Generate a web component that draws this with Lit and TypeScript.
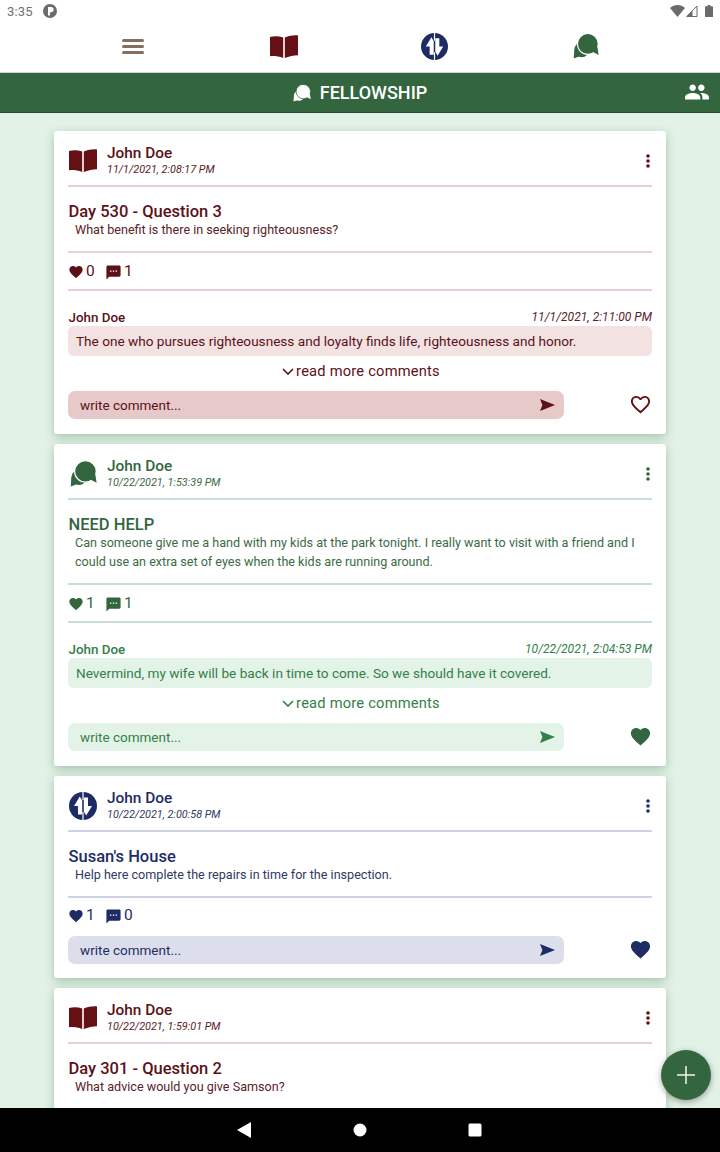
import { LitElement, html, css } from "lit";
import { customElement } from "lit/decorators.js";

const heartPath = "M12 21.35l-1.45-1.32C5.4 15.36 2 12.28 2 8.5 2 5.42 4.42 3 7.5 3c1.74 0 3.41.81 4.5 2.09C13.09 3.81 14.76 3 16.5 3 19.58 3 22 5.42 22 8.5c0 3.78-3.4 6.86-8.55 11.54L12 21.35z";
const heartOutline = "M16.5 3c-1.74 0-3.41.81-4.5 2.09C10.91 3.81 9.24 3 7.5 3 4.42 3 2 5.42 2 8.5c0 3.78 3.4 6.86 8.55 11.54L12 21.35l1.45-1.32C18.6 15.36 22 12.28 22 8.5 22 5.42 19.58 3 16.5 3zm-4.4 15.55l-.1.1-.1-.1C7.14 14.24 4 11.39 4 8.5 4 6.5 5.5 5 7.5 5c1.54 0 3.04.99 3.57 2.36h1.87C13.46 5.99 14.96 5 16.5 5c2 0 3.5 1.5 3.5 3.5 0 2.89-3.14 5.74-7.9 10.05z";
const smsPath = "M20 2H4c-1.1 0-1.99.9-1.99 2L2 22l4-4h14c1.1 0 2-.9 2-2V4c0-1.1-.9-2-2-2zM9 11H7V9h2v2zm4 0h-2V9h2v2zm4 0h-2V9h2v2z";
const peoplePath = "M16 11c1.66 0 2.99-1.34 2.99-3S17.66 5 16 5c-1.66 0-3 1.34-3 3s1.34 3 3 3zm-8 0c1.66 0 2.99-1.34 2.99-3S9.66 5 8 5C6.34 5 5 6.34 5 8s1.34 3 3 3zm0 2c-2.33 0-7 1.17-7 3.5V19h14v-2.5c0-2.33-4.67-3.5-7-3.5zm8 0c-.29 0-.62.02-.97.05 1.16.84 1.97 1.97 1.97 3.45V19h6v-2.5c0-2.33-4.67-3.5-7-3.5z";

const bookIcon = (w: number, h: number) => html`<svg width=${w} height=${h} viewBox="0 0 28 23" fill="currentColor">
  <path d="M0 2 C4.5 .8 9 1 13.2 2.6 V23 C9 21.4 4.5 20.9 0 21.2 Z"/>
  <path d="M28 .4 V20.2 C23.5 20.4 19 21.2 14.8 23 V2.6 C19 .8 23.5 0 28 .4 Z"/>
</svg>`;

const chatIcon = (size: number, cut: string) => html`<svg width=${size} height=${size} viewBox="0 0 28 28" fill="currentColor">
  <circle cx="9.4" cy="18" r="8"/>
  <path d="M1.4 18 L.8 27.4 L6.5 25.4 Z"/>
  <circle cx="16" cy="11.8" r="11.2" stroke=${cut} stroke-width="1.2"/>
  <path d="M20.5 20 L27.6 23.6 L26.3 15 Z"/>
</svg>`;

const activityIcon = (size: number) => html`<svg width=${size} height=${size} viewBox="0 0 28 28">
  <circle cx="14" cy="14" r="14" fill="currentColor"/>
  <path d="M13.4 0 H14.6 V8 H13.4 Z M13.4 20 H14.6 V28 H13.4 Z" fill="#fff"/>
  <path d="M10.8 4.5 L5 14 H9 V22.5 H13.2 V8.5 Z" fill="#fff"/>
  <path d="M17.2 23.5 L23 14 H19 V5.5 H14.8 V19.5 Z" fill="#fff"/>
</svg>`;

const heart = (size: number, path = heartPath) => html`<svg width=${size} height=${size} viewBox="0 0 24 24" fill="currentColor"><path d=${path}/></svg>`;
const sms = (size: number) => html`<svg width=${size} height=${size} viewBox="0 0 24 24" fill="currentColor"><path d=${smsPath}/></svg>`;
const dots = html`<svg width="4" height="14" viewBox="0 0 4 14" fill="currentColor"><circle cx="2" cy="2" r="1.8"/><circle cx="2" cy="7" r="1.8"/><circle cx="2" cy="12" r="1.8"/></svg>`;
const send = html`<svg width="15" height="12" viewBox="0 0 15 12" fill="currentColor"><path d="M0 0 L15 6 L0 12 L2.4 6 Z"/></svg>`;
const chevron = html`<svg width="12" height="7" viewBox="0 0 12 7" fill="none" stroke="currentColor" stroke-width="1.6"><path d="M1 1 L6 6 L11 1"/></svg>`;

interface Post {
  theme: string;
  icon: () => unknown;
  date: string;
  title: string;
  body: string[];
  likes: string;
  comments: string;
  comment?: { date: string; text: string };
  liked: boolean;
}

const posts: Post[] = [
  {
    theme: "maroon", icon: () => bookIcon(28, 23), date: "11/1/2021, 2:08:17 PM",
    title: "Day 530 - Question 3", body: ["What benefit is there in seeking righteousness?"],
    likes: "0", comments: "1", comment: { date: "11/1/2021, 2:11:00 PM", text: "The one who pursues righteousness and loyalty finds life, righteousness and honor." }, liked: false,
  },
  {
    theme: "green", icon: () => chatIcon(27, "#fff"), date: "10/22/2021, 1:53:39 PM",
    title: "NEED HELP", body: ["Can someone give me a hand with my kids at the park tonight. I really want to visit with a friend and I", "could use an extra set of eyes when the kids are running around."],
    likes: "1", comments: "1", comment: { date: "10/22/2021, 2:04:53 PM", text: "Nevermind, my wife will be back in time to come. So we should have it covered." }, liked: true,
  },
  {
    theme: "navy", icon: () => activityIcon(28), date: "10/22/2021, 2:00:58 PM",
    title: "Susan's House", body: ["Help here complete the repairs in time for the inspection."],
    likes: "1", comments: "0", liked: true,
  },
  {
    theme: "maroon", icon: () => bookIcon(28, 23), date: "10/22/2021, 1:59:01 PM",
    title: "Day 301 - Question 2", body: ["What advice would you give Samson?"],
    likes: "0", comments: "0", liked: false,
  },
];

@customElement("app-root")
export class AppRoot extends LitElement {
  static styles = css`
    :host {
      display: flex;
      flex-direction: column;
      position: relative;
      width: 720px;
      height: 1152px;
      overflow: hidden;
      font-family: Roboto, "Liberation Sans", sans-serif;
      background: #fff;
    }
    .status {
      height: 22px;
      padding: 0 7px 2px;
      flex: none;
      display: flex;
      align-items: center;
      color: #6f6f6f;
      font-size: 13px;
      background: #fff;
    }
    .status .time { margin-right: 10px; letter-spacing: .2px; }
    .pico {
      width: 14px; height: 14px; border-radius: 50%; background: #6b6b6b;
      display: flex; align-items: center; justify-content: center;
    }
    .status .right { margin-left: auto; display: flex; align-items: center; gap: 1px; }
    .topnav {
      height: 44px;
      padding: 0 0 4px 57px;
      flex: none;
      display: grid;
      grid-template-columns: 151px 151px 151px 151px;
      align-items: center;
      justify-items: center;
      background: #fff;
      border-bottom: 1px solid #c9d6cc;
    }
    .topnav .i { display: flex; align-items: center; justify-content: center; }
    .ham { display: flex; flex-direction: column; gap: 3px; width: 22px; }
    .ham span { height: 3px; border-radius: 1.5px; background: #85705f; }
    .c-maroon { color: #651014; }
    .c-navy { color: #1e2c66; }
    .c-green { color: #33663f; }
    .titlebar {
      height: 39px;
      flex: none;
      background: #33663f;
      border-bottom: 1px solid #234d2d;
      color: #fff;
      display: flex;
      align-items: center;
      justify-content: center;
      position: relative;
      font-size: 18px;
      font-weight: 500;
      gap: 9px;
    }
    .titlebar .people { position: absolute; right: 10px; top: 6px; display: flex; }
    .feed {
      flex: 1;
      min-height: 0;
      overflow: hidden;
      background: #e2f2e6;
      padding: 18px 54px 0;
      display: flex;
      flex-direction: column;
      gap: 10px;
    }
    .card {
      flex: none;
      background: #fff;
      border-radius: 3px;
      box-shadow: 0 3px 10px rgba(51, 102, 63, .34);
      padding: 0 14px 15px;
      color: var(--c);
    }
    .card.plain { padding-bottom: 14px; }
    .maroon { --c: #5c1118; --soft: #5a2229; --line: #e9cfd0; --bubble: #f2e2e2; --input: #e6c9c8; --t: #651014; }
    .green { --c: #33663f; --soft: #3c6a47; --line: #cadfd3; --bubble: #e4f3e8; --input: #e4f3e8; --t: #33663f; }
    .navy { --c: #1e2c66; --soft: #2f3a63; --line: #cdd1e1; --bubble: #dcdfeb; --input: #dcdfeb; --t: #1e2c66; }
    .green .ctext, .green .cname, .green .cdate, .green .more, .green .input { color: #33804a; }
    .head {
      height: 56px;
      display: flex;
      align-items: center;
      border-bottom: 2px solid var(--line);
      padding-top: 5px;
      box-sizing: border-box;
    }
    .avatar { width: 29px; display: flex; justify-content: center; color: var(--t); margin-right: 10px; padding-left: 1px; box-sizing: border-box; }
    .who { flex: 1; display: flex; flex-direction: column; }
    .name { font-size: 15.4px; font-weight: 500; line-height: 18px; }
    .date { font-size: 10.8px; font-style: italic; line-height: 14px; margin-top: 1px; color: var(--soft); }
    .kebab { display: flex; margin-right: 2px; color: var(--c); }
    .post {
      padding: 16px 0 12px;
      border-bottom: 2px solid var(--line);
    }
    .title { font-size: 16.5px; font-weight: 500; line-height: 17px; padding-left: .5px; }
    .body { font-size: 12.6px; line-height: 19px; padding-left: 7px; color: var(--soft); }
    .stats {
      height: 34px;
      display: flex;
      align-items: center;
      font-size: 15.5px;
      color: var(--c);
    }
    .stats.ruled { height: 36px; border-bottom: 2px solid var(--line); }
    .stats .g { display: flex; align-items: center; gap: 2px; width: 37px; }
    .stats svg { margin-top: 2px; }
    .chead { display: flex; justify-content: space-between; align-items: flex-end; padding-top: 18px; height: 17px; line-height: 17px; }
    .cname { font-size: 13.4px; font-weight: 500; padding-left: .5px; }
    .cdate { font-size: 12.1px; font-style: italic; color: var(--soft); }
    .green .cdate { color: #33804a; }
    .ctext {
      background: var(--bubble);
      border-radius: 6px;
      height: 30px;
      line-height: 30px;
      padding: 0 7px 0 8px;
      font-size: 13.6px;
    }
    .more {
      height: 30px;
      display: flex;
      align-items: center;
      justify-content: center;
      gap: 2px;
      padding-left: 2px;
      font-size: 14.7px;
      letter-spacing: .2px;
      color: var(--c);
    }
    .write { display: flex; align-items: center; margin-top: 5px; }
    .write.first { margin-top: 4px; }
    .input {
      width: 496px;
      height: 28px;
      box-sizing: border-box;
      border-radius: 7px;
      background: var(--input);
      display: flex;
      align-items: center;
      justify-content: space-between;
      padding: 0 9px 0 12px;
      font-size: 13.5px;
      color: var(--c);
    }
    .like { margin: 0 0 2px auto; display: flex; color: var(--t); }
    .navbar {
      height: 44px;
      flex: none;
      background: #000;
      display: flex;
      align-items: center;
      padding-left: 236px;
      gap: 101px;
    }
    .navbar svg { display: block; }
    .fab {
      position: absolute;
      left: 661px;
      top: 1050px;
      width: 50px;
      height: 50px;
      border-radius: 50%;
      background: #33663f;
      box-shadow: 0 2px 6px rgba(0, 0, 0, .35);
      display: flex;
      align-items: center;
      justify-content: center;
    }
  `;

  private renderCard(p: Post) {
    return html`<article class="card ${p.theme} ${p.comment ? "" : "plain"}">
      <div class="head">
        <div class="avatar">${p.icon()}</div>
        <div class="who">
          <div class="name">John Doe</div>
          <div class="date">${p.date}</div>
        </div>
        <div class="kebab">${dots}</div>
      </div>
      <div class="post">
        <div class="title">${p.title}</div>
        ${p.body.map((l) => html`<div class="body">${l}</div>`)}
      </div>
      <div class="stats ${p.comment ? "ruled" : ""}">
        <span class="g">${heart(16)}${p.likes}</span>
        <span class="g">${sms(17)}${p.comments}</span>
      </div>
      ${p.comment
        ? html`<div class="chead"><span class="cname">John Doe</span><span class="cdate">${p.comment.date}</span></div>
            <div class="ctext">${p.comment.text}</div>
            <div class="more">${chevron}<span>read more comments</span></div>`
        : ""}
      <div class="write ${p.comment ? "" : "first"}">
        <div class="input"><span>write comment...</span>${send}</div>
        <div class="like">${p.liked ? heart(23) : heart(23, heartOutline)}</div>
      </div>
    </article>`;
  }

  render() {
    return html`
      <div class="status">
        <span class="time">3:35</span>
        <span class="pico"><svg width="10" height="10" viewBox="0 0 10 10"><path d="M3 1 H6 A2.6 2.6 0 0 1 6 6.2 H5 V9.5 H3 Z" fill="#fff"/></svg></span>
        <span class="right">
          <svg width="15" height="12" viewBox="0 0 15 12" fill="#6b6b6b"><path d="M0 3 C4 -1 11 -1 15 3 L7.5 12 Z"/></svg>
          <svg width="12" height="12" viewBox="0 0 12 12"><path d="M.7 11.5 L11 1 V11.5 Z" fill="none" stroke="#6b6b6b" stroke-width="1"/><path d="M.7 11.5 L6.5 5.7 V11.5 Z" fill="#6b6b6b"/></svg>
          <svg width="8" height="12" viewBox="0 0 8 12" fill="#6b6b6b" style="margin-left:6px"><path d="M1 1.2 H2.6 V0 H5.4 V1.2 H7 Q8 1.2 8 2.2 V12 H0 V2.2 Q0 1.2 1 1.2 Z"/></svg>
        </span>
      </div>
      <nav class="topnav">
        <div class="i"><div class="ham"><span></span><span></span><span></span></div></div>
        <div class="i c-maroon">${bookIcon(28, 23)}</div>
        <div class="i c-navy">${activityIcon(27)}</div>
        <div class="i c-green">${chatIcon(26, "#fff")}</div>
      </nav>
      <header class="titlebar">
        <span style="display:flex;color:#fff">${chatIcon(18, "#33663f")}</span>
        <span>FELLOWSHIP</span>
        <span class="people"><svg width="26" height="26" viewBox="0 0 24 24" fill="#fff"><path d=${peoplePath}/></svg></span>
      </header>
      <main class="feed">${posts.map((p) => this.renderCard(p))}</main>
      <footer class="navbar">
        <svg width="16" height="18" viewBox="0 0 16 18" fill="#fff"><path d="M15 1 V17 L1 9 Z"/></svg>
        <svg width="14" height="14" viewBox="0 0 14 14" fill="#fff"><circle cx="7" cy="7" r="6.5"/></svg>
        <svg width="14" height="14" viewBox="0 0 14 14" fill="#fff"><rect x=".5" y=".5" width="13" height="13" rx="1.5"/></svg>
      </footer>
      <div class="fab"><svg width="18" height="18" viewBox="0 0 18 18" fill="none" stroke="#f2f7ec" stroke-width="1.5"><path d="M9 0 V18 M0 9 H18"/></svg></div>
    `;
  }
}
